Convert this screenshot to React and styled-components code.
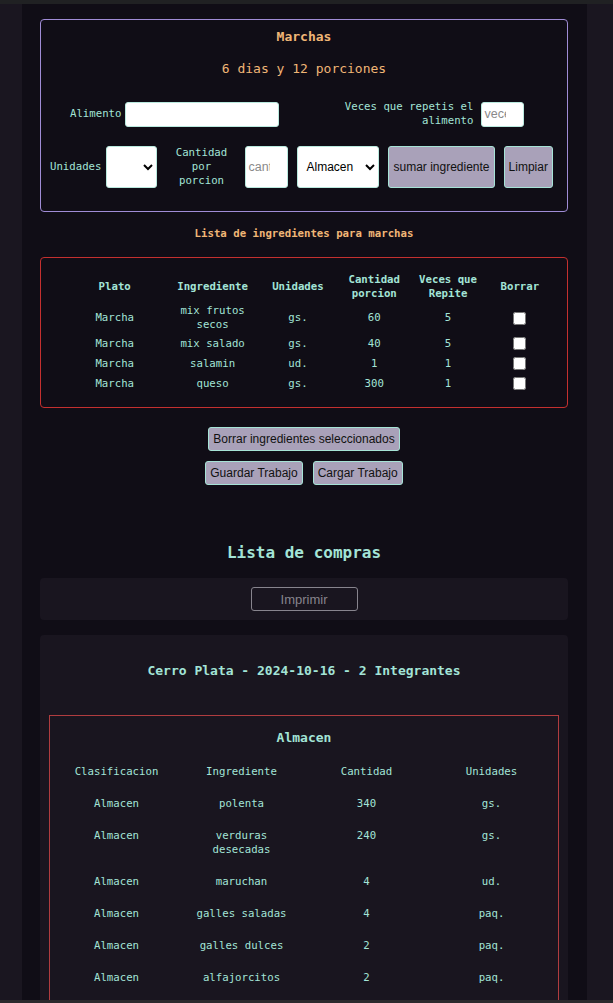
import React from "react";
import styled, { createGlobalStyle } from "styled-components";

const GlobalStyle = createGlobalStyle`
  html, body {
    margin: 0;
    background: #1a1620;
  }
  body {
    font-family: "DejaVu Sans Mono", "Liberation Mono", monospace;
    font-size: 10.7px;
    color: #a3e4d7;
  }
`;

const TopStrip = styled.div`
  height: 4px;
  background: #202123;
`;

const BottomStrip = styled.div`
  position: fixed;
  left: 0;
  right: 0;
  bottom: 0;
  height: 3px;
  background: #2b2a2d;
`;

const Page = styled.div`
  display: flex;
  min-height: calc(100vh - 4px);
`;

const Column = styled.main`
  margin-left: 22px;
  width: 565px;
  background: #100d16;
  padding: 15px 19px 40px 18px;
  box-sizing: border-box;
  display: flex;
  flex-direction: column;
`;

const FormBox = styled.section`
  border: 1px solid #a08cd6;
  border-radius: 4px;
  padding: 9px 0 23px;
  display: flex;
  flex-direction: column;
`;

const Title = styled.h2`
  margin: 0;
  text-align: center;
  color: #f0b676;
  font-size: 13px;
  line-height: 16px;
  font-weight: ${(p) => (p.$bold ? 700 : 400)};
  margin-top: ${(p) => p.$top || 0}px;
`;

const FormRow = styled.div`
  display: flex;
  align-items: center;
  padding-left: ${(p) => p.$left}px;
  margin-top: ${(p) => p.$top}px;
  gap: ${(p) => p.$gap || 0}px;
`;

const Label = styled.label`
  line-height: 14px;
  text-align: ${(p) => p.$align || "left"};
  width: ${(p) => (p.$w ? `${p.$w}px` : "auto")};
  margin-right: ${(p) => p.$mr || 0}px;
  margin-left: ${(p) => p.$ml || 0}px;
  flex-shrink: 0;
`;

const TextInput = styled.input`
  box-sizing: border-box;
  width: ${(p) => p.$w}px;
  height: ${(p) => p.$h}px;
  border: 1px solid #b9e9de;
  border-radius: 3px;
  background: #fff;
  padding: 0 2px;
  font-family: "Liberation Sans", Arial, sans-serif;
  font-size: 12.5px;
  flex-shrink: 0;
  &::placeholder {
    color: #8a8a8a;
  }
`;

const Select = styled.select`
  box-sizing: border-box;
  width: ${(p) => p.$w}px;
  height: 42px;
  border: 1px solid #b9e9de;
  border-radius: 3px;
  background: #fff;
  color: #000;
  font-family: "Liberation Sans", Arial, sans-serif;
  font-size: 12px;
  padding: 0 4px;
  flex-shrink: 0;
`;

const Button = styled.button`
  box-sizing: border-box;
  background: #a9a1b9;
  border: 1px solid #a6e3d6;
  border-radius: 3px;
  color: #111;
  font-family: "Liberation Sans", Arial, sans-serif;
  font-size: 12px;
  height: ${(p) => p.$h || 24}px;
  padding: 0 4px;
  flex-shrink: 0;
  white-space: nowrap;
`;

const SectionLabel = styled.h3`
  margin: 15px 0 0;
  text-align: center;
  color: #f0b676;
  font-size: 10.7px;
  line-height: 14px;
  font-weight: 700;
`;

const IngredientsBox = styled.section`
  margin-top: 16px;
  border: 1px solid #c4302f;
  border-radius: 4px;
  padding: 13px 12px 13px 22px;
`;

const IngTable = styled.table`
  width: 100%;
  border-spacing: 0 1px;
  table-layout: fixed;
  text-align: center;
  th, td {
    padding: 1px 0;
    line-height: 14px;
    vertical-align: middle;
  }
  th {
    font-weight: 700;
  }
  input[type="checkbox"] {
    width: 13px;
    height: 13px;
    margin: 2px 0;
    vertical-align: middle;
  }
`;

const ActionStack = styled.div`
  margin-top: 19px;
  display: flex;
  flex-direction: column;
  align-items: center;
  gap: 10px;
`;

const ActionRow = styled.div`
  display: flex;
  gap: 10px;
`;

const ComprasTitle = styled.h2`
  margin: 58px 0 0;
  text-align: center;
  font-size: 16px;
  line-height: 20px;
  font-weight: 700;
  color: #a3e4d7;
`;

const PrintPanel = styled.div`
  margin-top: 15px;
  height: 42px;
  background: #19151f;
  border-radius: 4px;
  display: flex;
  align-items: center;
  justify-content: center;
`;

const GhostButton = styled.button`
  width: 107px;
  height: 24px;
  background: transparent;
  border: 1px solid #87848d;
  border-radius: 3px;
  color: #87848d;
  font-family: "Liberation Sans", Arial, sans-serif;
  font-size: 13px;
`;

const Card = styled.section`
  margin-top: 15px;
  background: #19151f;
  border-radius: 4px 4px 0 0;
  padding: 28px 9px 40px;
`;

const CardTitle = styled.h3`
  margin: 0;
  text-align: center;
  font-size: 13px;
  line-height: 16px;
  font-weight: 700;
`;

const CategoryBox = styled.div`
  margin-top: 36px;
  border: 1px solid #b03c3f;
  padding: 14px 3px 10px;
`;

const CategoryTitle = styled.h4`
  margin: 0;
  text-align: center;
  font-size: 13px;
  line-height: 16px;
  font-weight: 700;
`;

const ShopTable = styled.table`
  width: 100%;
  margin-top: 9px;
  border-spacing: 2px;
  table-layout: fixed;
  text-align: center;
  th, td {
    padding: 8px;
    line-height: 14px;
    vertical-align: top;
  }
  th {
    font-weight: 400;
  }
`;

const ingredients = [
  ["Marcha", "mix frutos secos", "gs.", 60, 5],
  ["Marcha", "mix salado", "gs.", 40, 5],
  ["Marcha", "salamin", "ud.", 1, 1],
  ["Marcha", "queso", "gs.", 300, 1],
];

const compras = [
  ["Almacen", "polenta", 340, "gs."],
  ["Almacen", "verduras desecadas", 240, "gs."],
  ["Almacen", "maruchan", 4, "ud."],
  ["Almacen", "galles saladas", 4, "paq."],
  ["Almacen", "galles dulces", 2, "paq."],
  ["Almacen", "alfajorcitos", 2, "paq."],
  ["Almacen", "arroz", 500, "gs."],
];

export default function App() {
  return (
    <>
      <GlobalStyle />
      <TopStrip />
      <Page>
        <Column>
          <FormBox>
            <Title $bold>Marchas</Title>
            <Title $top={16}>6 dias y 12 porciones</Title>
            <FormRow $left={29} $top={23}>
              <Label $mr={4}>Alimento</Label>
              <TextInput $w={154} $h={25} />
              <Label $w={130} $align="right" $ml={64} $mr={8}>
                Veces que repetis el alimento
              </Label>
              <TextInput type="number" $w={43} $h={25} placeholder="veces" />
            </FormRow>
            <FormRow $left={9} $top={18} $gap={9}>
              <Label $mr={-4}>Unidades</Label>
              <Select $w={51}>
                <option></option>
              </Select>
              <Label $w={70} $align="center">
                Cantidad por porcion
              </Label>
              <TextInput type="number" $w={43} $h={42} placeholder="cantidad" />
              <Select $w={82}>
                <option>Almacen</option>
              </Select>
              <Button $h={42}>sumar ingrediente</Button>
              <Button $h={42}>Limpiar</Button>
            </FormRow>
          </FormBox>

          <SectionLabel>Lista de ingredientes para marchas</SectionLabel>
          <IngredientsBox>
            <IngTable>
              <colgroup>
                <col style={{ width: 103 }} />
                <col style={{ width: 92 }} />
                <col style={{ width: 78 }} />
                <col style={{ width: 74 }} />
                <col style={{ width: 73 }} />
                <col style={{ width: 70 }} />
              </colgroup>
              <thead>
                <tr>
                  <th>Plato</th>
                  <th>Ingrediente</th>
                  <th>Unidades</th>
                  <th>Cantidad porcion</th>
                  <th>Veces que Repite</th>
                  <th>Borrar</th>
                </tr>
              </thead>
              <tbody>
                {ingredients.map((r) => (
                  <tr key={r[1]}>
                    <td>{r[0]}</td>
                    <td>{r[1]}</td>
                    <td>{r[2]}</td>
                    <td>{r[3]}</td>
                    <td>{r[4]}</td>
                    <td>
                      <input type="checkbox" />
                    </td>
                  </tr>
                ))}
              </tbody>
            </IngTable>
          </IngredientsBox>

          <ActionStack>
            <Button>Borrar ingredientes seleccionados</Button>
            <ActionRow>
              <Button>Guardar Trabajo</Button>
              <Button>Cargar Trabajo</Button>
            </ActionRow>
          </ActionStack>

          <ComprasTitle>Lista de compras</ComprasTitle>
          <PrintPanel>
            <GhostButton>Imprimir</GhostButton>
          </PrintPanel>

          <Card>
            <CardTitle>Cerro Plata - 2024-10-16 - 2 Integrantes</CardTitle>
            <CategoryBox>
              <CategoryTitle>Almacen</CategoryTitle>
              <ShopTable>
                <thead>
                  <tr>
                    <th>Clasificacion</th>
                    <th>Ingrediente</th>
                    <th>Cantidad</th>
                    <th>Unidades</th>
                  </tr>
                </thead>
                <tbody>
                  {compras.map((r) => (
                    <tr key={r[1]}>
                      <td>{r[0]}</td>
                      <td>{r[1]}</td>
                      <td>{r[2]}</td>
                      <td>{r[3]}</td>
                    </tr>
                  ))}
                </tbody>
              </ShopTable>
            </CategoryBox>
          </Card>
        </Column>
      </Page>
      <BottomStrip />
    </>
  );
}
